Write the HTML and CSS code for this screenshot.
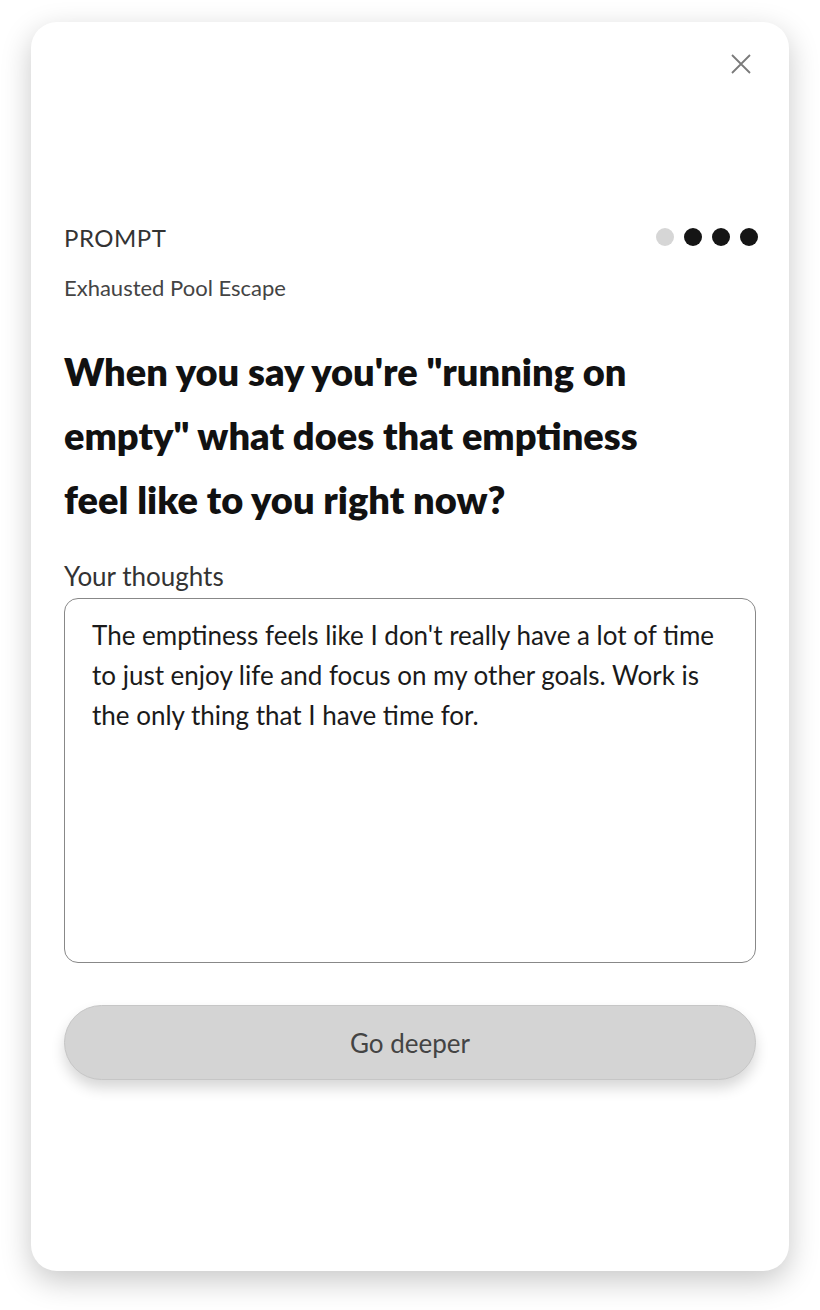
FILE: index.html
```html
<!DOCTYPE html>
<html lang="en">

<head>
    <meta charset="UTF-8">
    <meta name="viewport" content="width=device-width, initial-scale=1.0">
    <title>Prompt</title>
    <link rel="stylesheet" href="styles.css">
</head>

<body>
    <div class="card">
        <div class="card-top">
            <button class="close-btn" aria-label="Close">
                <svg width="20" height="20" viewBox="0 0 20 20">
                    <path d="M1 1 L19 19 M19 1 L1 19" stroke="#7a7a7a" stroke-width="1.8" fill="none" />
                </svg>
            </button>
        </div>

        <div class="prompt-head">
            <span class="prompt-label">PROMPT</span>
            <div class="steps">
                <span class="dot dot-off"></span>
                <span class="dot"></span>
                <span class="dot"></span>
                <span class="dot"></span>
            </div>
        </div>
        <p class="prompt-title">Exhausted Pool Escape</p>

        <h1 class="question">When you say you're "running on empty" what does that emptiness feel like to you right now?</h1>

        <label class="field-label" for="thoughts">Your thoughts</label>
        <div class="thoughts" id="thoughts">The emptiness feels like I don't really have a lot of time to just enjoy life and focus on my other goals. Work is the only thing that I have time for.</div>

        <button class="deeper-btn">Go deeper</button>
    </div>
</body>

</html>
```

FILE: styles.css
```css
* {
    box-sizing: border-box;
    margin: 0;
    padding: 0;
}

body {
    font-family: 'Lato', 'Liberation Sans', sans-serif;
    background-color: #fff;
    padding: 22px 31px 39px 31px;
    min-height: 100vh;
}

.card {
    width: 758px;
    height: 1249px;
    background-color: #fff;
    border-radius: 26px;
    box-shadow: 0 10px 30px rgba(0, 0, 0, 0.22);
    padding: 0 33px;
    display: flex;
    flex-direction: column;
}

.card-top {
    display: flex;
    justify-content: flex-end;
    padding-top: 23px;
    margin-right: -4px;
    height: 195px;
}

.close-btn {
    background: none;
    border: none;
    width: 38px;
    height: 38px;
    display: flex;
    align-items: center;
    justify-content: center;
    cursor: pointer;
}

.prompt-head {
    display: flex;
    justify-content: space-between;
    align-items: center;
    height: 40px;
    margin-right: -2px;
}

.prompt-label {
    font-size: 24px;
    color: #333;
    letter-spacing: 0.5px;
}

.steps {
    display: flex;
    gap: 10px;
}

.dot {
    width: 18px;
    height: 18px;
    border-radius: 50%;
    background-color: #151515;
}

.dot-off {
    background-color: #d6d6d6;
}

.prompt-title {
    font-size: 22px;
    color: #444;
    margin-top: 17px;
}

.question {
    font-size: 38px;
    font-weight: 800;
    color: #111;
    line-height: 64px;
    margin-top: 38px;
    padding-right: 70px;
}

.field-label {
    font-size: 26px;
    color: #333;
    margin-top: 30px;
    line-height: 30px;
}

.thoughts {
    margin-top: 7px;
    height: 365px;
    border: 1.5px solid #888;
    border-radius: 14px;
    padding: 16px 27px;
    font-size: 26px;
    line-height: 40px;
    color: #1a1a1a;
}

.deeper-btn {
    margin-top: 42px;
    height: 75px;
    border-radius: 40px;
    background-color: #d4d4d4;
    border: 1.5px solid #c6c6c6;
    box-shadow: 0 8px 14px rgba(0, 0, 0, 0.16);
    font-family: inherit;
    font-size: 26px;
    color: #444;
    cursor: pointer;
}
```
